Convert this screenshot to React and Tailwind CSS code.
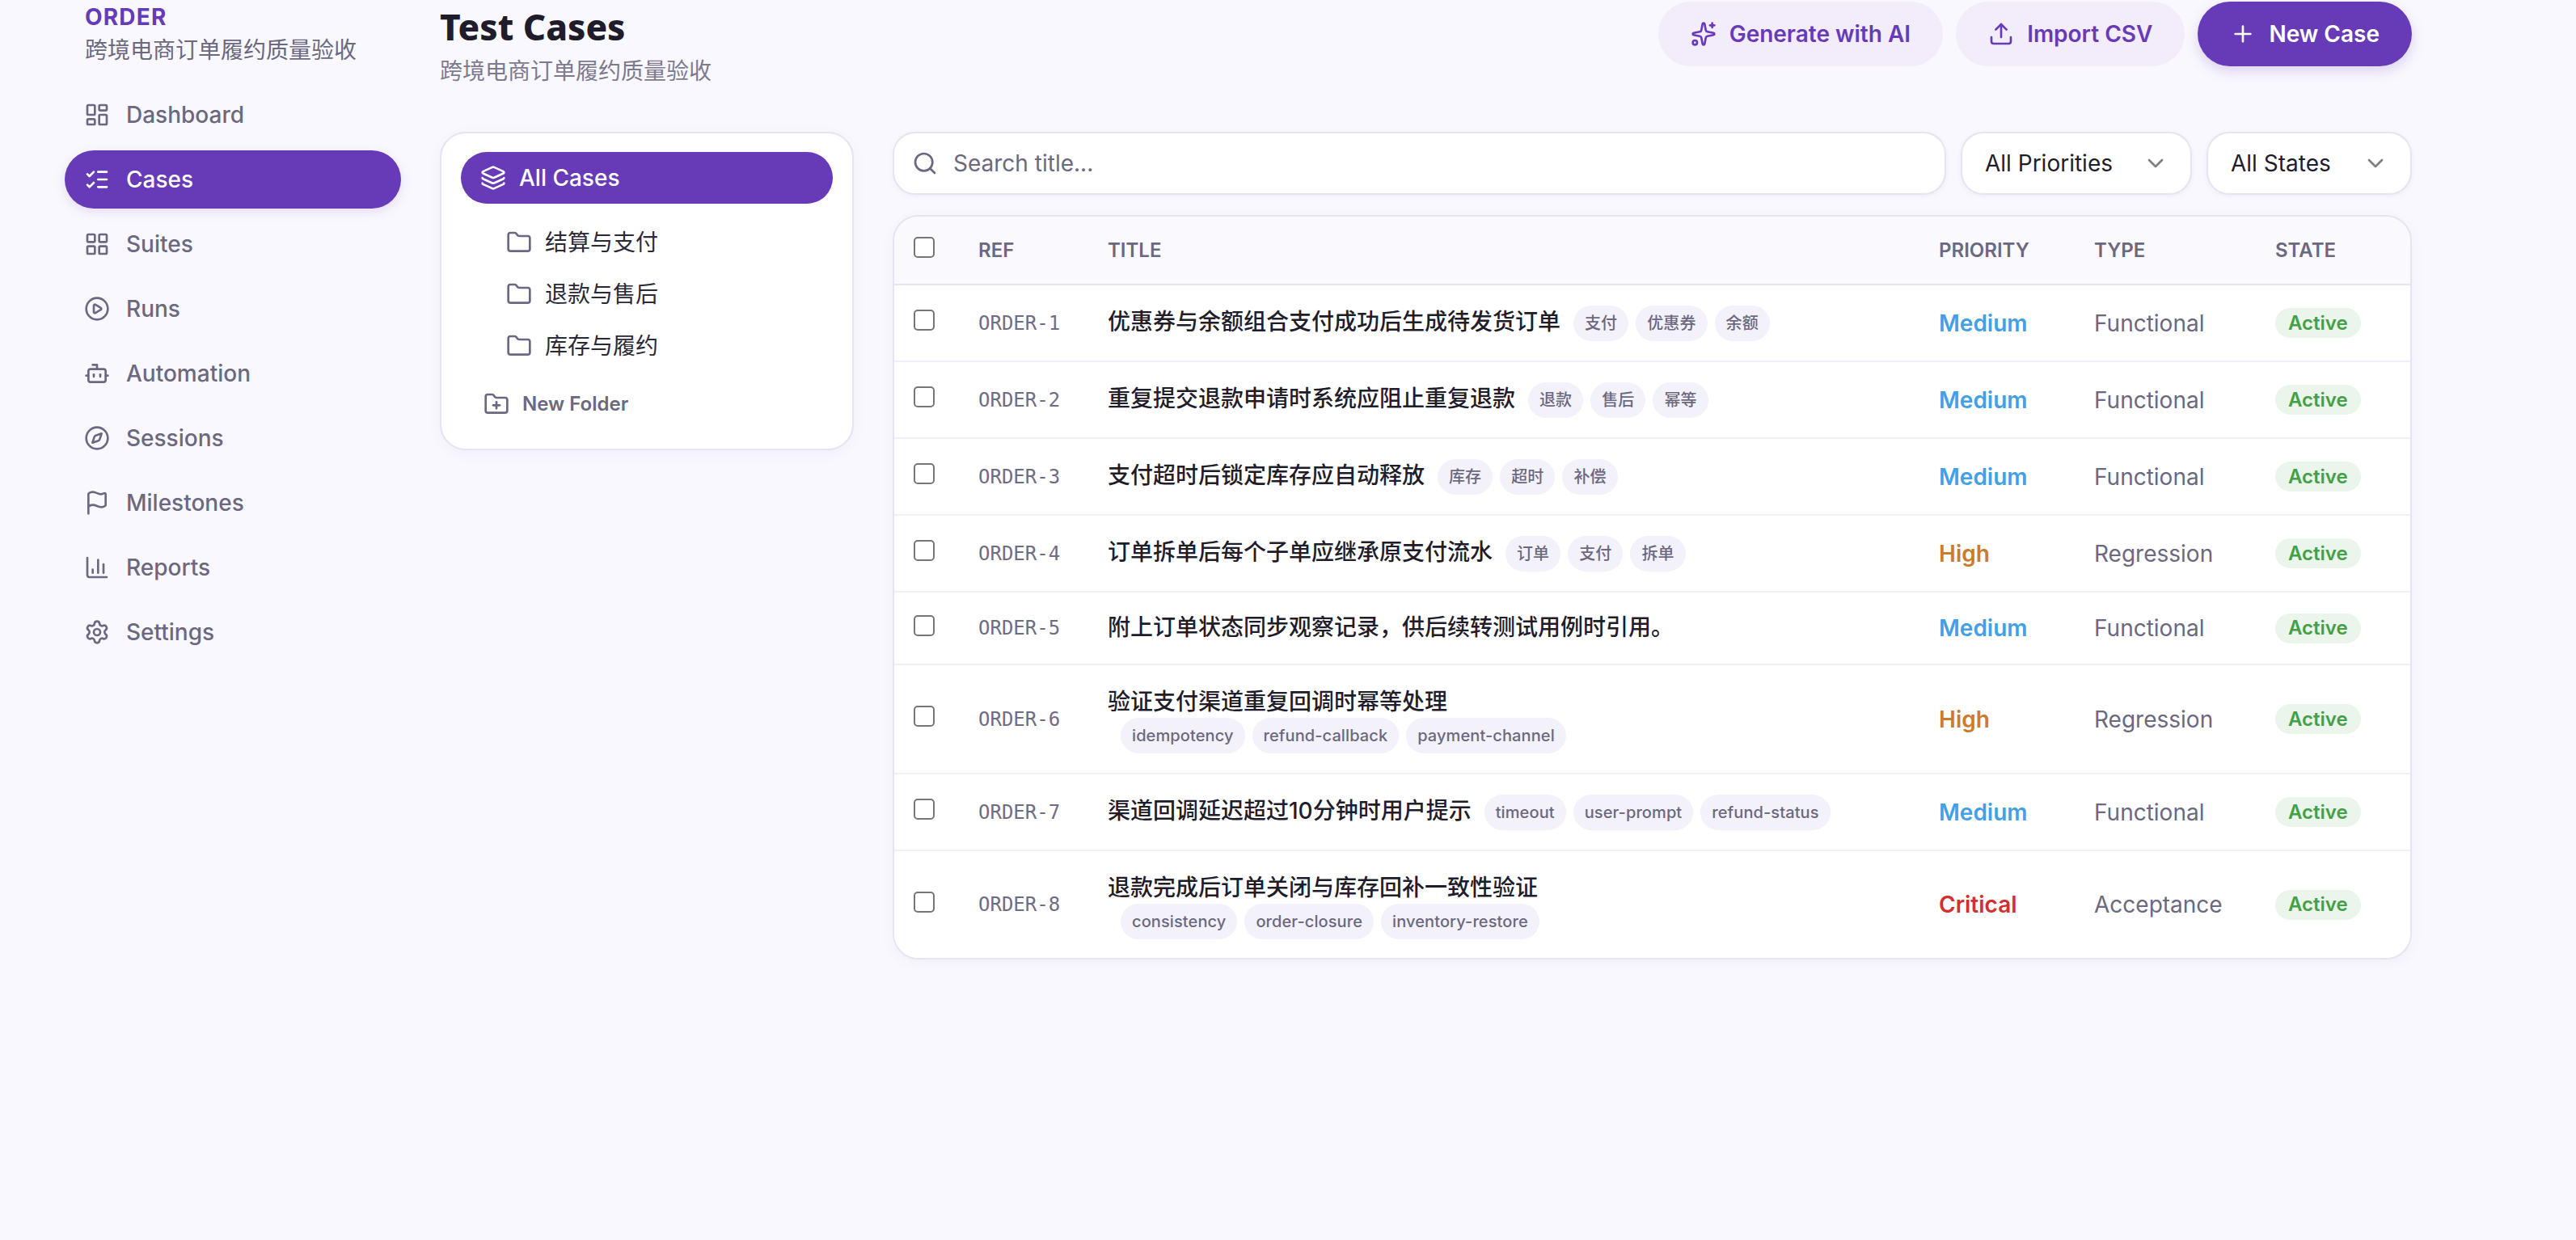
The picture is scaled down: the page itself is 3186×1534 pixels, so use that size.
import React from "react";
import {
  LayoutDashboard, ListChecks, LayoutGrid, CirclePlay, Bot, Compass, Flag, ChartColumn, Settings,
  Sparkles, Upload, Plus, Search, ChevronDown, Layers, Folder, FolderPlus,
} from "lucide-react";

const nav = [
  ["Dashboard", LayoutDashboard],
  ["Cases", ListChecks, true],
  ["Suites", LayoutGrid],
  ["Runs", CirclePlay],
  ["Automation", Bot],
  ["Sessions", Compass],
  ["Milestones", Flag],
  ["Reports", ChartColumn],
  ["Settings", Settings],
];

const priorityClass = {
  Medium: "text-[#42a0e6]",
  High: "text-[#cc7a2b]",
  Critical: "text-[#d32f2f]",
};

const rows = [
  { ref: "ORDER-1", title: "优惠券与余额组合支付成功后生成待发货订单", tags: ["支付", "优惠券", "余额"], p: "Medium", t: "Functional" },
  { ref: "ORDER-2", title: "重复提交退款申请时系统应阻止重复退款", tags: ["退款", "售后", "幂等"], p: "Medium", t: "Functional" },
  { ref: "ORDER-3", title: "支付超时后锁定库存应自动释放", tags: ["库存", "超时", "补偿"], p: "Medium", t: "Functional" },
  { ref: "ORDER-4", title: "订单拆单后每个子单应继承原支付流水", tags: ["订单", "支付", "拆单"], p: "High", t: "Regression" },
  { ref: "ORDER-5", title: "附上订单状态同步观察记录，供后续转测试用例时引用。", tags: [], p: "Medium", t: "Functional", h: "h-[90px]" },
  { ref: "ORDER-6", title: "验证支付渠道重复回调时幂等处理", tags: ["idempotency", "refund-callback", "payment-channel"], p: "High", t: "Regression", wrap: true, h: "h-[135px]" },
  { ref: "ORDER-7", title: "渠道回调延迟超过10分钟时用户提示", tags: ["timeout", "user-prompt", "refund-status"], p: "Medium", t: "Functional" },
  { ref: "ORDER-8", title: "退款完成后订单关闭与库存回补一致性验证", tags: ["consistency", "order-closure", "inventory-restore"], p: "Critical", t: "Acceptance", wrap: true, h: "h-[132px]", last: true },
];

const grid = "grid grid-cols-[80px_160px_1fr_192px_224px_191px] items-center";

function Check() {
  return (
    <input
      type="checkbox"
      readOnly
      className="appearance-none block w-[26px] h-[26px] ml-6 -mt-[7px] bg-white border-2 border-[#767676] rounded-[5px]"
    />
  );
}

function Tags({ tags, className }) {
  return (
    <div className={"flex gap-[9px] " + className}>
      {tags.map((t) => (
        <span key={t} className="h-11 px-[14px] flex items-center rounded-full bg-[#f3f1f9] text-[20px] tracking-[0.1px] font-medium text-[#6b6880]">
          {t}
        </span>
      ))}
    </div>
  );
}

function Row({ r }) {
  return (
    <div className={grid + " bg-white " + (r.h || "h-[95px]") + (r.last ? "" : " border-b-2 border-[#f1eff7]")}>
      <Check />
      <span className="pl-6 font-['DejaVu_Sans_Mono',monospace] text-[24px] text-[#6f6c85]">{r.ref}</span>
      {r.wrap ? (
        <div className="flex flex-col pl-6">
          <span className="text-[28px] leading-[44px] font-medium text-[#1f1d2b] -mt-[1px]">{r.title}</span>
          <Tags tags={r.tags} className="ml-4 -mt-[2px]" />
        </div>
      ) : (
        <div className="flex items-center gap-4 pl-6 -mt-[3px]">
          <span className="text-[28px] leading-[44px] font-medium text-[#1f1d2b]">{r.title}</span>
          {r.tags.length > 0 && <Tags tags={r.tags} className="translate-y-[2px]" />}
        </div>
      )}
      <span className={"pl-6 text-[28px] font-semibold " + priorityClass[r.p]}>{r.p}</span>
      <span className="pl-6 text-[28px] text-[#6b6880]">{r.t}</span>
      <div className="pl-6">
        <span className="inline-flex items-center h-[37px] px-4 rounded-full bg-[#ebf5ec] text-[24px] font-semibold text-[#43a047]">Active</span>
      </div>
    </div>
  );
}

function Select({ label, width }) {
  return (
    <div className={"h-[78px] flex items-center justify-between pl-7 pr-[27px] bg-white border-2 border-[#e6e3f2] rounded-[28px] shadow-[0_2px_6px_rgba(103,58,183,0.06)] text-[28px] text-[#1f1d2b] " + width}>
      <span>{label}</span>
      <ChevronDown size={32} className="text-[#7f7d88]" />
    </div>
  );
}

export default function App() {
  return (
    <div className="min-h-[1534px] flex bg-[#f9f8fe] font-[family-name:Inter,'Noto_Sans_CJK_SC',sans-serif] overflow-hidden">
      <aside className="w-[544px] shrink-0 pl-20 pr-12 pt-[7px]">
        <div className="pl-[25px]">
          <div className="text-[28px] leading-[28px] font-bold tracking-[1.2px] text-[#673ab7]">ORDER</div>
          <div className="text-[28px] leading-[42px] mt-[6px] text-[#6b6880]">跨境电商订单履约质量验收</div>
        </div>
        <nav className="mt-[23px] flex flex-col gap-2">
          {nav.map(([label, Icon, active]) => (
            <div
              key={label}
              className={
                "h-[72px] flex items-center gap-5 px-6 rounded-full text-[28px] font-medium " +
                (active
                  ? "bg-[#673ab7] text-white shadow-[0_4px_14px_rgba(103,58,183,0.14)]"
                  : "text-[#6b6880]")
              }
            >
              <Icon size={32} />
              <span>{label}</span>
            </div>
          ))}
        </nav>
      </aside>

      <main className="w-[2439px] shrink-0 pt-[2px]">
        <header className="h-[161px] flex justify-between items-start">
          <div>
            <h1 className="font-['Noto_Sans',sans-serif] font-extrabold text-[44px] leading-[60px] mt-[1px] text-[#1f1d2b]">Test Cases</h1>
            <p className="text-[28px] leading-[42px] mt-1 text-[#7d7a90]">跨境电商订单履约质量验收</p>
          </div>
          <div className="flex gap-4">
            <button className="h-20 px-10 flex items-center gap-4 rounded-full bg-[#f2ecfb] text-[#673ab7] text-[28px] font-semibold">
              <Sparkles size={32} />Generate with AI
            </button>
            <button className="h-20 px-10 flex items-center gap-4 rounded-full bg-[#f2ecfb] text-[#673ab7] text-[28px] font-semibold">
              <Upload size={32} />Import CSV
            </button>
            <button className="h-20 px-10 flex items-center gap-4 rounded-full bg-[#673ab7] text-white text-[28px] font-semibold shadow-[0_6px_16px_rgba(103,58,183,0.2)]">
              <Plus size={32} />New Case
            </button>
          </div>
        </header>

        <div className="flex items-start gap-12">
          <section className="w-[512px] h-[394px] shrink-0 bg-white border-2 border-[#e6e3f2] rounded-[32px] shadow-[0_4px_16px_rgba(103,58,183,0.05)] px-6 pt-[23px]">
            <div className="h-16 flex items-center gap-4 px-6 rounded-full bg-[#673ab7] text-white text-[28px] font-medium">
              <Layers size={32} />All Cases
            </div>
            <div className="mt-4 pl-14 flex flex-col">
              {["结算与支付", "退款与售后", "库存与履约"].map((f) => (
                <div key={f} className="h-16 flex items-center gap-4 text-[28px] text-[#2b2938]">
                  <Folder size={32} className="text-[#6b6880]" />
                  {f}
                </div>
              ))}
            </div>
            <div className="mt-2 h-16 flex items-center gap-4 pl-7 text-[24px] font-semibold text-[#6b6880]">
              <FolderPlus size={32} />New Folder
            </div>
          </section>

          <section className="flex-1 min-w-0">
            <div className="flex gap-[18px] items-center">
              <div className="flex-1 h-[78px] flex items-center gap-[19px] pl-[22px] bg-white border-2 border-[#e6e3f2] rounded-[28px] shadow-[0_2px_6px_rgba(103,58,183,0.06)] text-[28px] text-[#6b6880]">
                <Search size={32} />
                <span>Search title...</span>
              </div>
              <Select label="All Priorities" width="w-[286px]" />
              <Select label="All States" width="w-[254px]" />
            </div>
            <div className="mt-[25px] border-2 border-[#e6e3f2] rounded-[32px] overflow-hidden shadow-[0_4px_16px_rgba(103,58,183,0.05)]">
              <div className={grid + " h-[85px] bg-[#faf9fe] border-b-2 border-[#e6e3f2] text-[24px] font-semibold text-[#6b6880]"}>
                <Check />
                <span className="pl-6">REF</span>
                <span className="pl-6">TITLE</span>
                <span className="pl-6">PRIORITY</span>
                <span className="pl-6">TYPE</span>
                <span className="pl-6">STATE</span>
              </div>
              {rows.map((r) => (
                <Row key={r.ref} r={r} />
              ))}
            </div>
          </section>
        </div>
      </main>
    </div>
  );
}
